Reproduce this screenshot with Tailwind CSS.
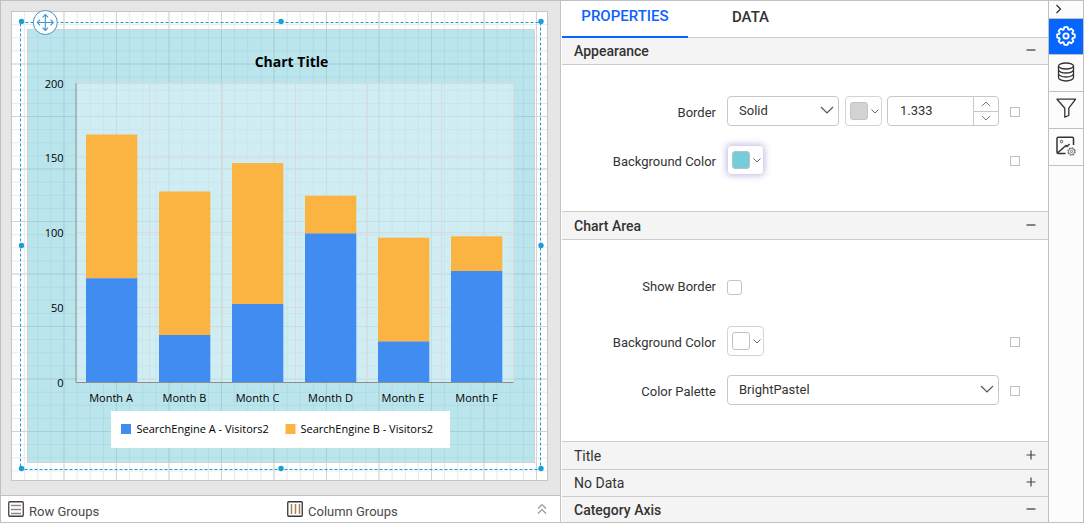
<!DOCTYPE html>
<html lang="en">
<head>
<meta charset="utf-8">
<meta name="viewport" content="width=device-width, initial-scale=1">
<title>Report Designer</title>
<script src="https://cdn.jsdelivr.net/npm/@tailwindcss/browser@4"></script>
</head>
<body class="bg-white font-[Roboto,sans-serif] text-[#333333]">
<div class="flex h-screen overflow-hidden border border-[#c0c0c0]">

  <!-- Design surface -->
  <main class="flex min-w-0 flex-1 flex-col border-r border-[#c4c4c4]">
    <div class="min-h-0 flex-1 bg-[#e6e6e6]">
      <svg class="block h-full w-full" viewBox="1 1 559 494" role="img" aria-label="Stacked column chart on the report page">
        <defs>
          <pattern id="minor" x="12" y="12" width="13.125" height="13.125" patternUnits="userSpaceOnUse">
            <path d="M12.6 0V13.125M0 12.6H13.125" stroke="#e9e9e9" fill="none"/>
          </pattern>
          <pattern id="major" x="12" y="12" width="52.5" height="52.5" patternUnits="userSpaceOnUse">
            <path d="M52 0V52.5M0 52H52.5" stroke="#d4d4d4" fill="none"/>
          </pattern>
        </defs>
        <rect x="11.5" y="11.5" width="536" height="469" fill="#fff" stroke="#c6c6c6"/>
        <rect x="12" y="12" width="535" height="468" fill="url(#minor)"/>
        <rect x="12" y="12" width="535" height="468" fill="url(#major)"/>
        <!-- chart background -->
        <rect x="27.5" y="29.5" width="507" height="433" fill="#75ccdb" fill-opacity=".5" stroke="#d0d3d3"/>
        <rect x="76" y="83" width="437" height="299" fill="#fff" fill-opacity=".32"/>
        <path d="M76 83.5H513M76 157.5H513M76 232.5H513M76 307.5H513M149.5 83V382M222.5 83V382M295.5 83V382M367.5 83V382M441.5 83V382M513.5 83V382" stroke="#dadada" fill="none"/>
        <!-- columns -->
        <g fill="#fbb441">
          <rect x="86" y="134.500" width="51.300" height="144"/><rect x="159" y="191.500" width="51.300" height="144"/><rect x="232" y="163" width="51.300" height="141"/>
          <rect x="305" y="195.700" width="51.300" height="38"/><rect x="378" y="237.700" width="51.300" height="104"/><rect x="451" y="236.300" width="51.300" height="35"/>
        </g>
        <g fill="#418cf0">
          <rect x="86" y="278.300" width="51.300" height="104"/><rect x="159" y="335" width="51.300" height="47"/><rect x="232" y="304" width="51.300" height="78"/>
          <rect x="305" y="233.500" width="51.300" height="149"/><rect x="378" y="341.500" width="51.300" height="41"/><rect x="451" y="271" width="51.300" height="111"/>
        </g>
        <path d="M76 83V382.500H513.500" stroke="#8c8c8c" fill="none"/>
        <g fill="#000" font-family="'Open Sans','Noto Sans',sans-serif" font-size="11">
          <text x="291.500" y="67" text-anchor="middle" font-size="14" font-weight="700">Chart Title</text>
          <g text-anchor="end">
            <text x="63.500" y="88">200</text><text x="63.500" y="162">150</text><text x="63.500" y="237">100</text><text x="63.500" y="312">50</text><text x="63.500" y="387">0</text>
          </g>
          <g text-anchor="middle">
            <text x="111" y="402">Month A</text><text x="184.500" y="402">Month B</text><text x="257.500" y="402">Month C</text>
            <text x="330.500" y="402">Month D</text><text x="403" y="402">Month E</text><text x="476.500" y="402">Month F</text>
          </g>
          <rect x="111" y="411" width="339" height="37" fill="#fff"/>
          <rect x="121" y="424" width="10" height="10" fill="#418cf0"/>
          <text x="136.500" y="433">SearchEngine A - Visitors2</text>
          <rect x="285.500" y="424" width="10" height="10" fill="#fbb441"/>
          <text x="300.500" y="433">SearchEngine B - Visitors2</text>
        </g>
        <!-- selection frame and handles -->
        <rect x="20.500" y="22.500" width="520" height="447" fill="none" stroke="#1b9dd9" stroke-dasharray="3 2"/>
        <g fill="#1b9dd9">
          <circle cx="21.500" cy="21.500" r="2.700"/><circle cx="281" cy="21.500" r="2.700"/><circle cx="541" cy="21.500" r="2.700"/>
          <circle cx="21.500" cy="245.500" r="2.700"/><circle cx="541" cy="245.500" r="2.700"/>
          <circle cx="21.500" cy="468.500" r="2.700"/><circle cx="281" cy="468.500" r="2.700"/><circle cx="541" cy="468.500" r="2.700"/>
        </g>
        <circle cx="45.300" cy="22.500" r="12" fill="#fff" stroke="#4a93cf"/>
        <path d="M45.300 14.500V30.500M37.300 22.500H53.300M42.500 17.300L45.300 14.500L48.100 17.300M42.500 27.700L45.300 30.500L48.100 27.700M40.100 19.700L37.300 22.500L40.100 25.300M50.500 19.700L53.300 22.500L50.500 25.300" stroke="#3f94d2" stroke-width="1.100" fill="none"/>
      </svg>
    </div>
    <footer class="grid h-[27px] grid-cols-[279px_1fr_auto] items-center border-t border-[#c0c0c0] bg-white pr-3 pl-[7px] text-[13px] text-[#4a4a4a]">
      <div class="flex items-center gap-[5px]">
        <svg class="h-4 w-4" viewBox="0 0 16 16" fill="none"><rect x=".75" y=".75" width="14.500" height="14.500" rx="1" stroke="#4a3d3d" stroke-width="1.300"/><path d="M3 4.500H13M3 8.500H13M3 12.500H13" stroke="#8a8a8a" stroke-width="1.500"/></svg>
        <span class="pt-1.5">Row Groups</span>
      </div>
      <div class="flex items-center gap-[5px]">
        <svg class="h-4 w-4" viewBox="0 0 16 16" fill="none"><rect x=".75" y=".75" width="14.500" height="14.500" rx="1" stroke="#33353f" stroke-width="1.300"/><path d="M4.500 3V13M8.500 3V13M12.500 3V13" stroke="#a9824f" stroke-width="1.500"/></svg>
        <span class="pt-1.5">Column Groups</span>
      </div>
      <button type="button" aria-label="Expand groups"><svg class="h-3 w-3" viewBox="0 0 12 12" fill="none" stroke="#999" stroke-width="1.200"><path d="M2 5.500L6 1.500L10 5.500M2 10.500L6 6.500L10 10.500"/></svg></button>
    </footer>
  </main>

  <!-- Property panel -->
  <aside class="flex w-[487px] shrink-0 flex-col bg-white pl-px text-[13px]">
    <div class="flex h-[37px] shrink-0 border-b border-[#cccccc] text-[15px] font-medium" role="tablist">
      <button type="button" role="tab" aria-selected="true" class="-mb-px h-[37px] w-[126px] border-b-2 border-[#0565ff] pb-1 text-[#0f62fe]">PROPERTIES</button>
      <button type="button" role="tab" aria-selected="false" class="h-9 w-[125px] pb-1">DATA</button>
    </div>

    <section>
      <h2 class="border-b border-[#cccccc] bg-[#f4f4f4] text-sm font-medium">
        <button type="button" class="flex h-[26px] w-full items-center justify-between pr-[11px] pl-3">Appearance
          <svg class="h-3 w-3" viewBox="0 0 12 12" stroke="#444" stroke-width="1.300"><path d="M1.500 5H10.500"/></svg></button>
      </h2>
      <div class="flex h-[146px] flex-col gap-[19px] pt-[31px]">
        <div class="flex items-center">
          <label for="border-style" class="mr-[11px] w-[154px] pt-1 text-right">Border</label>
          <div class="flex w-[272px] justify-between">
            <div class="relative">
              <select id="border-style" class="h-[30px] w-28 appearance-none rounded border border-[#c8c8c8] bg-white pr-7 pb-px pl-[11px]"><option>Solid</option><option>Dashed</option><option>Dotted</option></select>
              <svg class="pointer-events-none absolute top-2 right-1 h-3 w-4" viewBox="0 0 16 12" fill="none" stroke="#555" stroke-width="1.200"><path d="M2 3L8 9L14 3"/></svg>
            </div>
            <button type="button" aria-label="Border color" class="flex h-[30px] w-[37px] items-center gap-[3px] rounded border border-[#d4d4d4] pl-1">
              <span class="h-[18px] w-[18px] rounded-[3px] border border-[#c4c4c4] bg-[#d3d3d3]"></span>
              <svg class="h-2 w-2" viewBox="0 0 8 8" fill="none" stroke="#666"><path d="M.5 2.500L4 6L7.500 2.500"/></svg></button>
            <div class="flex h-[30px] w-28 overflow-hidden rounded border border-[#c8c8c8]">
              <input type="text" inputmode="decimal" aria-label="Border width" value="1.333" class="min-w-0 flex-1 pb-px pl-3 outline-none">
              <div class="flex w-[25px] flex-col border-l border-[#c8c8c8]">
                <button type="button" aria-label="Increase" class="flex flex-1 items-center justify-center border-b border-[#c8c8c8]"><svg class="h-2 w-2.5" viewBox="0 0 10 8" fill="none" stroke="#777"><path d="M1 6L5 2L9 6"/></svg></button>
                <button type="button" aria-label="Decrease" class="flex flex-1 items-center justify-center"><svg class="h-2 w-2.5" viewBox="0 0 10 8" fill="none" stroke="#777"><path d="M1 2L5 6L9 2"/></svg></button>
              </div>
            </div>
          </div>
          <input type="checkbox" aria-label="Border expression" class="mt-[2px] ml-[11px] h-2.5 w-2.5 appearance-none border border-[#c0c0c0]">
        </div>
        <div class="flex items-center">
          <label for="bg-color" class="mr-[11px] w-[154px] pt-1 text-right">Background Color</label>
          <div class="flex w-[272px]">
            <button id="bg-color" type="button" class="flex h-[30px] w-[37px] items-center gap-[3px] rounded border border-[#d8d6ea] pl-1 shadow-[0_0_6px_1px_#c9c4e6]">
              <span class="h-[18px] w-[18px] rounded-[3px] border border-[#b9c4c8] bg-[#75ccdb]"></span>
              <svg class="h-2 w-2" viewBox="0 0 8 8" fill="none" stroke="#666"><path d="M.5 2.500L4 6L7.500 2.500"/></svg></button>
          </div>
          <input type="checkbox" aria-label="Background color expression" class="mt-[2px] ml-[11px] h-2.5 w-2.5 appearance-none border border-[#c0c0c0]">
        </div>
      </div>
    </section>

    <section>
      <h2 class="border-y border-[#cccccc] bg-[#f4f4f4] text-sm font-medium">
        <button type="button" class="flex h-[27px] w-full items-center justify-between pr-[11px] pl-3">Chart Area
          <svg class="h-3 w-3" viewBox="0 0 12 12" stroke="#444" stroke-width="1.300"><path d="M1.500 5H10.500"/></svg></button>
      </h2>
      <div class="flex h-[201px] flex-col pt-8">
        <div class="mb-6 flex h-[30px] items-center">
          <label for="show-border" class="mr-[11px] w-[154px] text-right">Show Border</label>
          <input id="show-border" type="checkbox" class="h-[15px] w-[15px] appearance-none rounded-[3px] border border-[#c4c4c4]">
        </div>
        <div class="mb-[19px] flex items-center">
          <label for="area-color" class="mr-[11px] w-[154px] pt-1 text-right">Background Color</label>
          <div class="flex w-[272px]">
            <button id="area-color" type="button" class="flex h-[30px] w-[37px] items-center gap-[3px] rounded border border-[#d4d4d4] pl-1">
              <span class="h-[18px] w-[18px] rounded-[3px] border border-[#c0c0c0] bg-white"></span>
              <svg class="h-2 w-2" viewBox="0 0 8 8" fill="none" stroke="#666"><path d="M.5 2.500L4 6L7.500 2.500"/></svg></button>
          </div>
          <input type="checkbox" aria-label="Area color expression" class="mt-[2px] ml-[11px] h-2.5 w-2.5 appearance-none border border-[#c0c0c0]">
        </div>
        <div class="flex items-center">
          <label for="palette" class="mr-[11px] w-[154px] pt-1 text-right">Color Palette</label>
          <div class="relative w-[272px]">
            <select id="palette" class="h-[30px] w-full appearance-none rounded border border-[#c8c8c8] bg-white pr-7 pl-[11px]"><option>BrightPastel</option><option>Pastel</option><option>EarthTones</option></select>
            <svg class="pointer-events-none absolute top-2 right-1 h-3 w-4" viewBox="0 0 16 12" fill="none" stroke="#555" stroke-width="1.200"><path d="M2 3L8 9L14 3"/></svg>
          </div>
          <input type="checkbox" aria-label="Color palette expression" class="mt-[2px] ml-[11px] h-2.5 w-2.5 appearance-none border border-[#c0c0c0]">
        </div>
      </div>
    </section>

    <h2 class="border-t border-[#cccccc] bg-[#f4f4f4] text-sm">
      <button type="button" class="flex h-[27px] w-full items-center justify-between pr-[11px] pl-3">Title
        <svg class="h-3 w-3" viewBox="0 0 12 12" stroke="#444" stroke-width="1.200"><path d="M1.500 5H10.500M6 .5V9.500"/></svg></button>
    </h2>
    <h2 class="border-t border-[#cccccc] bg-[#f4f4f4] text-sm">
      <button type="button" class="flex h-[26px] w-full items-center justify-between pr-[11px] pl-3">No Data
        <svg class="h-3 w-3" viewBox="0 0 12 12" stroke="#444" stroke-width="1.200"><path d="M1.500 5H10.500M6 .5V9.500"/></svg></button>
    </h2>
    <h2 class="border-t border-[#cccccc] bg-[#f4f4f4] text-sm font-medium">
      <button type="button" class="flex h-[26px] w-full items-center justify-between pr-[11px] pl-3">Category Axis
        <svg class="h-3 w-3" viewBox="0 0 12 12" stroke="#444" stroke-width="1.300"><path d="M1.500 5H10.500"/></svg></button>
    </h2>
  </aside>

  <!-- Icon rail -->
  <nav class="flex w-[35px] shrink-0 flex-col border-l border-[#c0c0c0] bg-[#fcfcfc]" aria-label="Panels">
    <button type="button" aria-label="Collapse panel" class="flex h-[18px] items-center border-b border-[#c0c0c0] pb-0.5 pl-1"><svg class="h-3 w-3" viewBox="0 0 12 12" fill="none" stroke="#333" stroke-width="1.300"><path d="M3.500 2L7.500 6L3.500 10"/></svg></button>
    <button type="button" aria-label="Properties" class="flex h-9 items-center justify-center border-b border-[#c0c0c0] bg-[#0565ff] pb-0.5">
      <svg class="h-5 w-5" viewBox="0 0 20 20" fill="none" stroke="#fff" stroke-width="1.800" stroke-linejoin="round"><path d="M8.300 1.200H11.700L12.300 3.500L13.100 3.900L15.200 2.700L17.400 4.900L16.200 7L16.500 7.800L18.800 8.400V11.600L16.500 12.200L16.200 13L17.400 15.100L15.200 17.300L13.100 16.100L12.300 16.500L11.700 18.800H8.300L7.700 16.500L6.900 16.100L4.800 17.300L2.600 15.100L3.800 13L3.500 12.200L1.200 11.600V8.400L3.500 7.800L3.800 7L2.600 4.900L4.800 2.700L6.900 3.900L7.700 3.500Z"/><circle cx="10" cy="10" r="2.600"/></svg></button>
    <button type="button" aria-label="Data" class="flex h-[37px] items-center justify-center border-b border-[#c0c0c0] pb-0.5">
      <svg class="h-5 w-5" viewBox="0 0 20 20" fill="none" stroke="#333" stroke-width="1.300"><ellipse cx="10" cy="4" rx="7.500" ry="3"/><path d="M2.500 4V15.500C2.500 17.300 5.800 19 10 19S17.500 17.300 17.500 15.500V4M2.500 7.800C2.500 9.500 5.800 11 10 11S17.500 9.500 17.500 7.800M2.500 11.700C2.500 13.400 5.800 15 10 15S17.500 13.400 17.500 11.700"/></svg></button>
    <button type="button" aria-label="Filters" class="flex h-[37px] items-center justify-center border-b border-[#c0c0c0] pb-1">
      <svg class="h-5 w-5" viewBox="0 0 20 20" fill="none" stroke="#333" stroke-width="1.300" stroke-linejoin="round"><path d="M1 1.200H19.600L12.800 10.200V17.500L8.800 19.200V10.200Z"/></svg></button>
    <button type="button" aria-label="Image settings" class="flex h-[37px] items-center justify-center border-b border-[#c0c0c0] pb-0.5">
      <svg class="h-5 w-5" viewBox="0 0 20 20" fill="none" stroke="#333" stroke-width="1.500"><path d="M17.500 9V2.500Q17.500 1.200 16.200 1.200H2.300Q1 1.200 1 2.500V16.200Q1 17.500 2.300 17.500H9.500M2 16.500L10 9.500L11 10.500L13.500 8"/><circle cx="5.500" cy="5.500" r="1.200" stroke="#456" stroke-width="1"/><circle cx="15.500" cy="15.500" r="3.600" stroke="#667" stroke-width="1.200" stroke-dasharray="1.700 1.100"/><circle cx="15.500" cy="15.500" r="3" stroke="#667" stroke-width=".8"/><circle cx="15.500" cy="15.500" r="1.100" stroke="#567" stroke-width=".8"/></svg></button>
  </nav>
</div>
</body>
</html>
